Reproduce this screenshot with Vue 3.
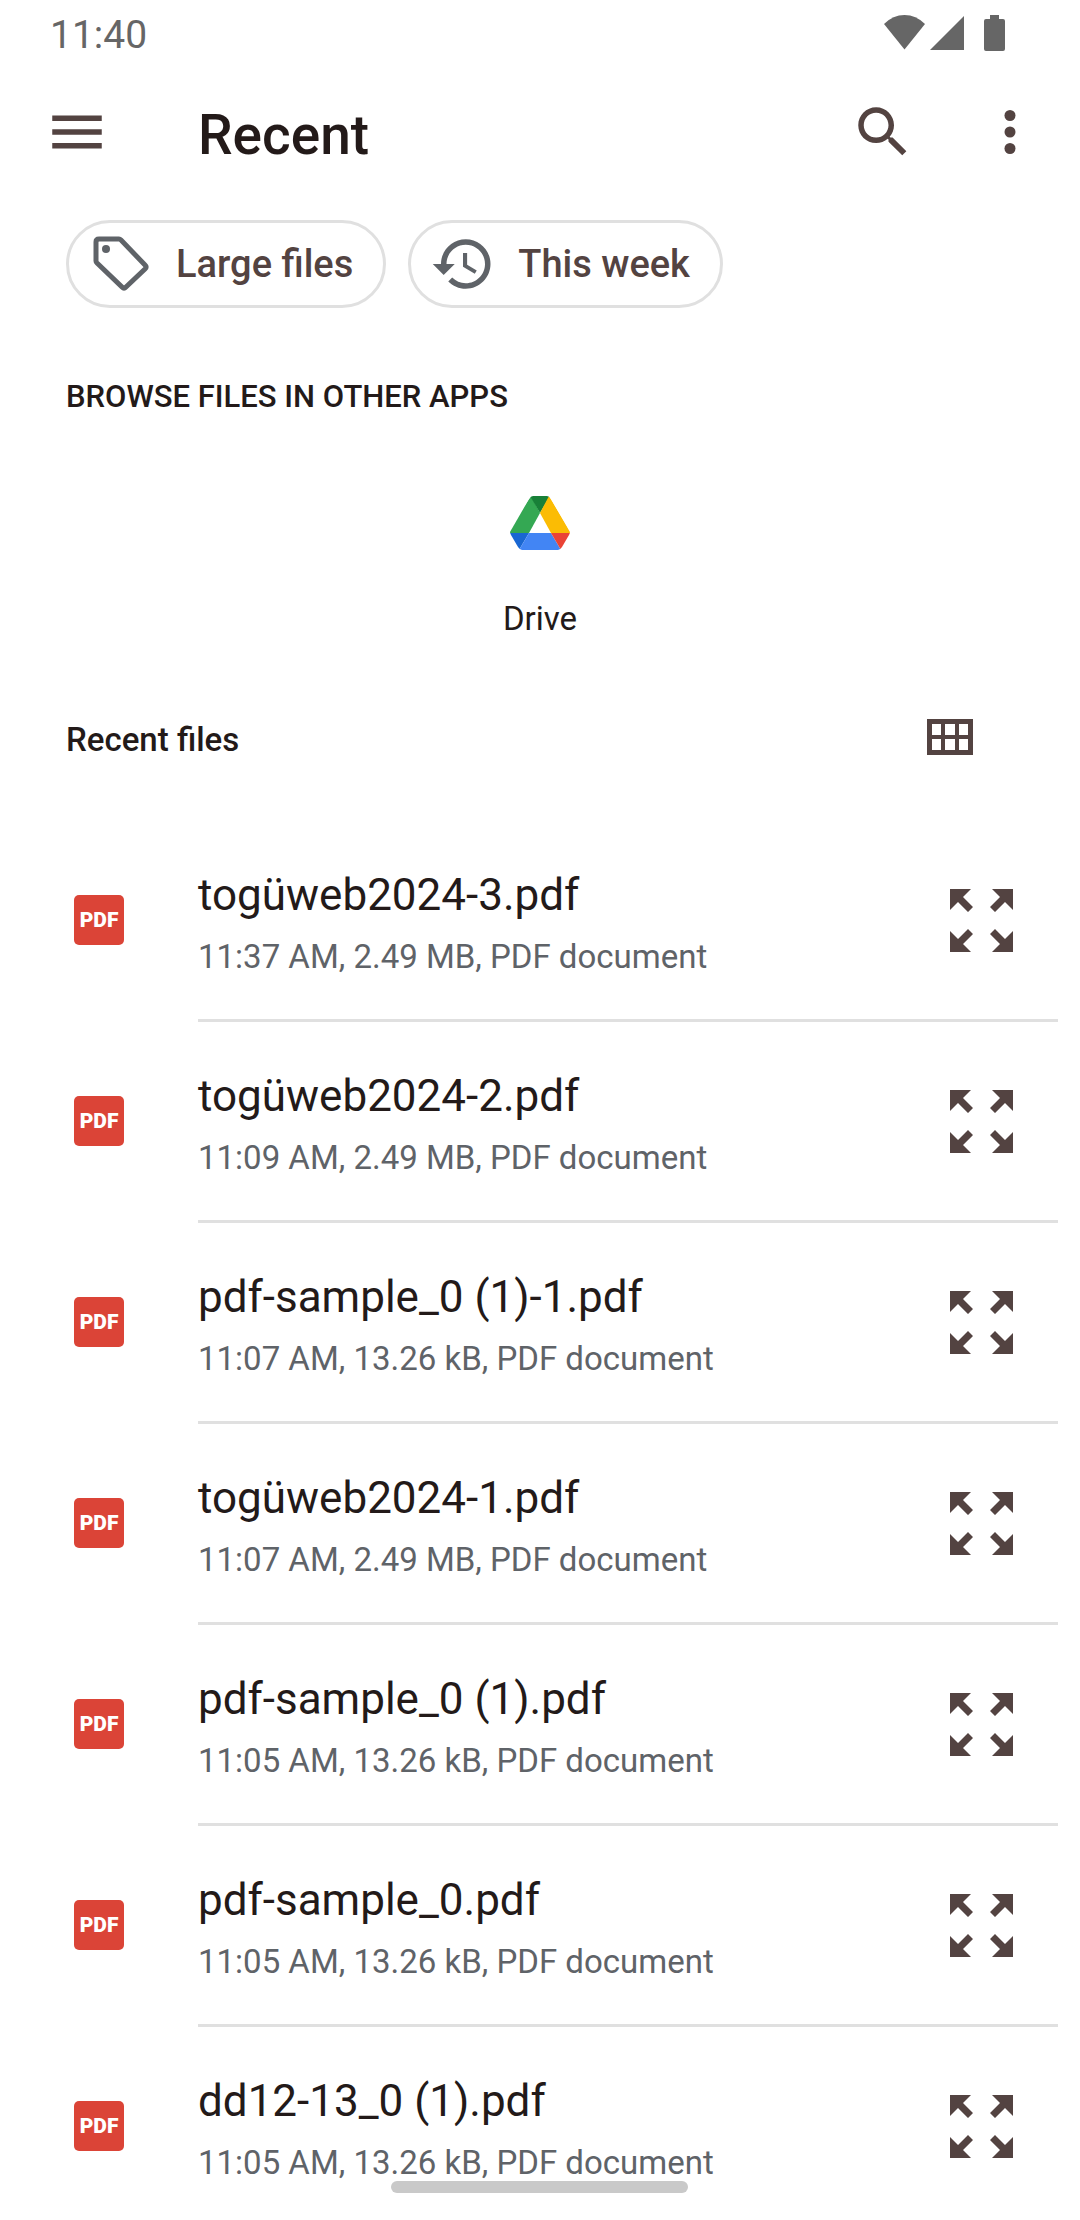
<script setup>
const files = [
  { name: 'togüweb2024-3.pdf', meta: '11:37 AM, 2.49 MB, PDF document' },
  { name: 'togüweb2024-2.pdf', meta: '11:09 AM, 2.49 MB, PDF document' },
  { name: 'pdf-sample_0 (1)-1.pdf', meta: '11:07 AM, 13.26 kB, PDF document' },
  { name: 'togüweb2024-1.pdf', meta: '11:07 AM, 2.49 MB, PDF document' },
  { name: 'pdf-sample_0 (1).pdf', meta: '11:05 AM, 13.26 kB, PDF document' },
  { name: 'pdf-sample_0.pdf', meta: '11:05 AM, 13.26 kB, PDF document' },
  { name: 'dd12-13_0 (1).pdf', meta: '11:05 AM, 13.26 kB, PDF document' }
]
</script>

<template>
  <div class="screen">
    <div class="status">
      <time>11:40</time>
      <div class="status-icons">
        <svg class="wifi" width="42" height="36" viewBox="0 0 42 36"><path d="M0 9Q9 0 20.500 0T41 9L20.500 34.500Z" /></svg>
        <svg class="signal" width="36" height="36" viewBox="0 0 36 36"><path d="M0 35L34 1V35Z" /></svg>
        <svg class="battery" width="22" height="36" viewBox="0 0 22 36"><path d="M6 0H15V4H19Q21 4 21 6V34Q21 36 19 36H2Q0 36 0 34V6Q0 4 2 4H6Z" /></svg>
      </div>
    </div>

    <header class="toolbar">
      <button class="icon-button" aria-label="Menu">
        <svg width="66" height="66" viewBox="0 0 24 24"><path d="M3 18h18v-2H3v2zm0-5h18v-2H3v2zm0-7v2h18V6H3z" /></svg>
      </button>
      <h1>Recent</h1>
      <div class="actions">
        <button class="icon-button" aria-label="Search">
          <svg width="66" height="66" viewBox="0 0 24 24"><path d="M15.500 14h-.79l-.28-.27C15.410 12.590 16 11.110 16 9.500 16 5.910 13.090 3 9.500 3S3 5.910 3 9.500 5.910 16 9.500 16c1.610 0 3.090-.59 4.230-1.570l.27.28v.79l5 4.990L20.490 19l-4.990-5zm-6 0C7.010 14 5 11.990 5 9.500S7.010 5 9.500 5 14 7.010 14 9.500 11.990 14 9.500 14z" /></svg>
        </button>
        <button class="icon-button" aria-label="More options">
          <svg width="66" height="66" viewBox="0 0 24 24"><circle cx="12" cy="6" r="2" /><circle cx="12" cy="12" r="2" /><circle cx="12" cy="18" r="2" /></svg>
        </button>
      </div>
    </header>

    <div class="chips">
      <button class="chip">
        <svg width="66" height="66" viewBox="0 0 66 66"><path class="outline" d="M11 8H31Q32 8 33 9L57 34Q59 36 57 38L38 56Q36 58 34 56L9 32Q8 31 8 30V11Q8 8 11 8Z" /><circle cx="18" cy="18" r="4" /></svg>
        <span>Large files</span>
      </button>
      <button class="chip">
        <svg width="66" height="66" viewBox="0 0 24 24"><path d="M13 3c-4.970 0-9 4.030-9 9H1l3.890 3.890.07.14L9 12H6c0-3.870 3.130-7 7-7s7 3.130 7 7-3.130 7-7 7c-1.930 0-3.680-.79-4.940-2.060l-1.420 1.420C8.270 19.990 10.510 21 13 21c4.970 0 9-4.030 9-9s-4.030-9-9-9zm-1 5v5l4.280 2.540.72-1.210-3.500-2.080V8H12z" /></svg>
        <span>This week</span>
      </button>
    </div>

    <section>
      <h2 class="browse">BROWSE FILES IN OTHER APPS</h2>
      <a class="app" href="#drive">
        <svg width="60" height="54" viewBox="0 0 60 54">
          <clipPath id="drive-shape"><path d="M23 0H37Q39 0 41 3L60 36Q60 37 59 39L52 51Q50 54 48 54H12Q10 54 8 51L1 39Q0 37 0 36L19 3Q21 0 23 0Z" /></clipPath>
          <g clip-path="url(#drive-shape)">
            <path fill="#34a853" d="M21 0L30 17L19 37H0V32Z" />
            <path fill="#188038" d="M20 0H40L30 17Z" />
            <path fill="#fbbc04" d="M39 0L61 37H41L30 17Z" />
            <path fill="#1967d2" d="M0 37H19L9 54H0Z" />
            <path fill="#4285f4" d="M19 37H41L51 54H9Z" />
            <path fill="#ea4335" d="M41 37H60V54H51Z" />
          </g>
        </svg>
        <span>Drive</span>
      </a>
    </section>

    <main>
      <div class="list-head">
        <h2>Recent files</h2>
        <button class="icon-button" aria-label="Grid view">
          <svg width="46" height="36" viewBox="0 0 46 36"><path fill-rule="evenodd" d="M0 0H46V36H0ZM5 5V16H14V5ZM18 5V16H28V5ZM32 5V16H41V5ZM5 20V31H14V20ZM18 20V31H28V20ZM32 20V31H41V20Z" /></svg>
        </button>
      </div>
      <ul>
        <li v-for="file in files" :key="file.name">
          <span class="pdf">PDF</span>
          <div class="body">
            <div class="info">
              <h3>{{ file.name }}</h3>
              <p>{{ file.meta }}</p>
            </div>
            <button class="icon-button" :aria-label="'Preview ' + file.name">
              <svg width="63" height="63" viewBox="0 0 63 63"><path d="M0 0H21L13 8L23 18L18 23L8 13L0 21ZM63 0V21L55 13L45 23L40 18L50 8L42 0ZM0 63V42L8 50L18 40L23 45L13 55L21 63ZM63 63H42L50 55L40 45L45 40L55 50L63 42Z" /></svg>
            </button>
          </div>
        </li>
      </ul>
    </main>
    <div class="home-bar"></div>
  </div>
</template>

<style>
html,
body {
  margin: 0;
  background: #fff;
}
</style>

<style scoped>
.screen {
  position: relative;
  height: 100vh;
  overflow: hidden;
  background: #fff;
  color: #231a19;
  font-family: Roboto, "Noto Sans", sans-serif;
}
svg {
  display: block;
  fill: currentColor;
  flex: none;
}
h1,
h2,
h3,
p,
ul {
  margin: 0;
  padding: 0;
  font-weight: 400;
}
button {
  padding: 0;
  border: 0;
  background: none;
  font: inherit;
}
.icon-button {
  display: block;
  color: #534341;
}
.status {
  display: flex;
  justify-content: space-between;
  align-items: center;
  height: 66px;
  padding: 0 74px 0 50px;
  box-sizing: border-box;
  color: #666;
  font-size: 39px;
}
time {
  padding-top: 3px;
}
.status-icons {
  display: flex;
  gap: 4px;
}
.battery {
  margin-left: 14px;
}
.toolbar {
  display: flex;
  align-items: center;
  height: 132px;
  padding: 0 37px 0 44px;
}
h1 {
  flex: 1;
  margin-left: 88px;
  padding-top: 6px;
  font-size: 55px;
  font-weight: 500;
}
.actions {
  display: flex;
  gap: 61px;
}
.chips {
  display: flex;
  gap: 22px;
  padding: 22px 66px 0;
}
.chip {
  display: flex;
  align-items: center;
  gap: 22px;
  height: 88px;
  padding: 0 30px 0 19px;
  box-sizing: border-box;
  border: 3px solid #e0e0e0;
  border-radius: 44px;
  color: #5f6368;
  font-size: 38px;
  font-weight: 500;
}
.chip span {
  color: #534341;
}
.outline {
  fill: none;
  stroke: currentColor;
  stroke-width: 5;
}
.app {
  display: flex;
  flex-direction: column;
  align-items: center;
  gap: 49px;
  width: 220px;
  margin: 77px auto 0;
  color: inherit;
  font-size: 33px;
  line-height: 40px;
  text-decoration: none;
}
.list-head {
  display: flex;
  justify-content: space-between;
  align-items: center;
  height: 66px;
  margin-top: 65px;
  padding: 0 107px 0 66px;
}
h2 {
  padding-top: 4px;
  font-size: 33px;
  font-weight: 500;
}
.browse {
  padding: 67px 66px 0;
  font-size: 31px;
  line-height: 44px;
}
ul {
  margin-top: 51px;
  list-style: none;
}
li {
  display: flex;
  align-items: center;
  height: 201px;
  padding: 0 22px 0 74px;
}
.pdf {
  width: 50px;
  height: 50px;
  margin-bottom: 3px;
  border-radius: 5px;
  background: #db4437;
  color: #fff;
  font-size: 21px;
  line-height: 50px;
  font-weight: 900;
  text-align: center;
}
.body {
  display: flex;
  flex: 1;
  align-items: center;
  justify-content: space-between;
  height: 100%;
  margin-left: 74px;
  padding-right: 45px;
  box-sizing: border-box;
  border-bottom: 3px solid #e0e0e0;
}
.info {
  padding-top: 6px;
}
h3 {
  font-size: 44px;
  line-height: 56px;
}
p {
  margin-top: 12px;
  color: #5f6368;
  font-size: 33px;
  line-height: 44px;
}
.home-bar {
  position: absolute;
  bottom: 27px;
  left: 50%;
  width: 297px;
  height: 12px;
  margin-left: -149px;
  border-radius: 6px;
  background: #c9c9c9;
}
</style>
